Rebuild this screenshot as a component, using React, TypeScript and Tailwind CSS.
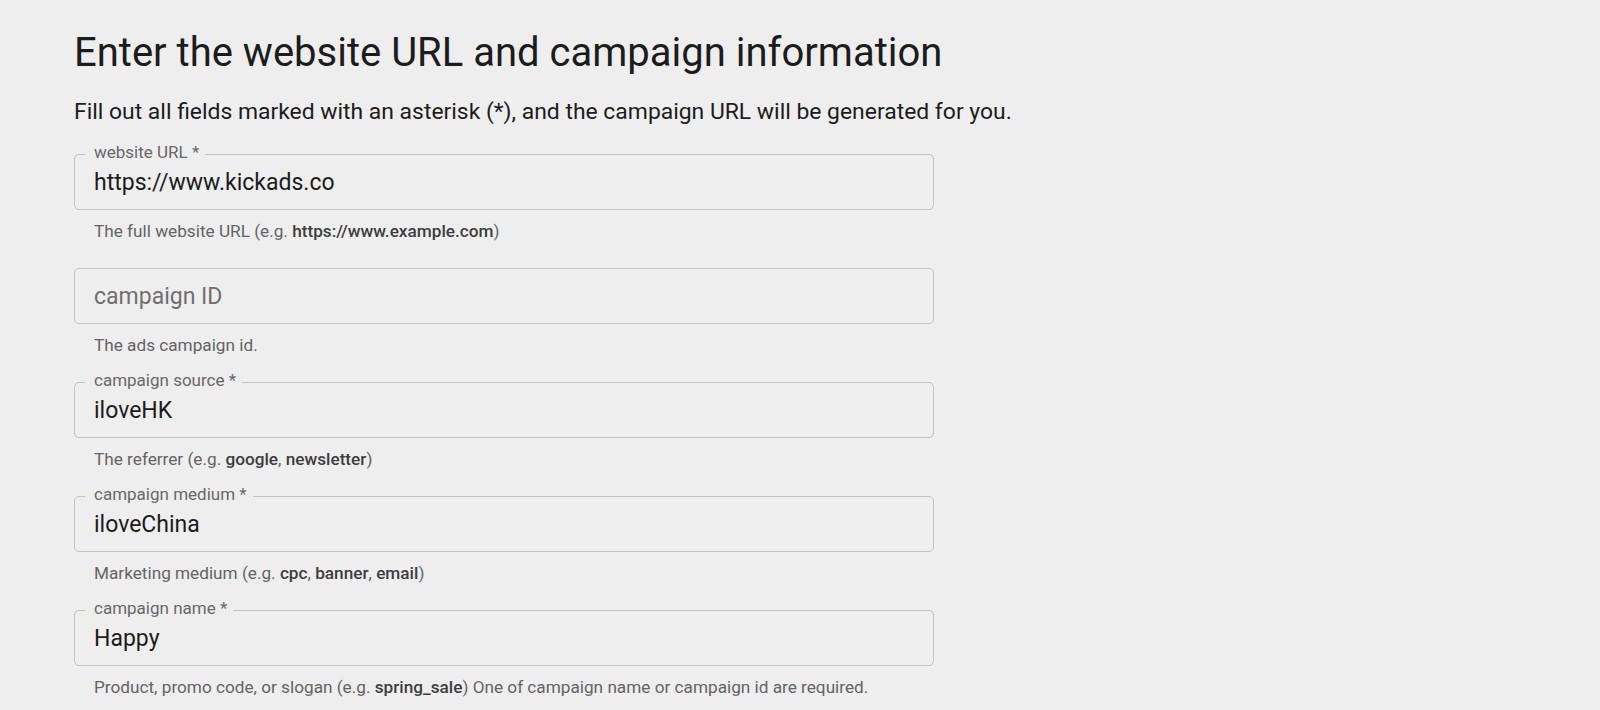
import React from 'react';

type Field = {
  label: string;
  required?: boolean;
  value: string;
  helper: React.ReactNode;
};

const fields: Field[] = [
  {
    label: 'website URL',
    required: true,
    value: 'https://www.kickads.co',
    helper: (
      <>
        The full website URL (e.g. <b className="font-medium text-[#3d3d3d]">https://www.example.com</b>)
      </>
    ),
  },
  {
    label: 'campaign ID',
    value: '',
    helper: <>The ads campaign id.</>,
  },
  {
    label: 'campaign source',
    required: true,
    value: 'iloveHK',
    helper: (
      <>
        The referrer (e.g. <b className="font-medium text-[#3d3d3d]">google</b>,{' '}
        <b className="font-medium text-[#3d3d3d]">newsletter</b>)
      </>
    ),
  },
  {
    label: 'campaign medium',
    required: true,
    value: 'iloveChina',
    helper: (
      <>
        Marketing medium (e.g. <b className="font-medium text-[#3d3d3d]">cpc</b>,{' '}
        <b className="font-medium text-[#3d3d3d]">banner</b>, <b className="font-medium text-[#3d3d3d]">email</b>)
      </>
    ),
  },
  {
    label: 'campaign name',
    required: true,
    value: 'Happy',
    helper: (
      <>
        Product, promo code, or slogan (e.g. <b className="font-medium text-[#3d3d3d]">spring_sale</b>) One of
        campaign name or campaign id are required.
      </>
    ),
  },
];

function OutlinedField({ field }: { field: Field }) {
  const filled = field.value.length > 0;
  return (
    <div className="mb-[26px] w-[860px]">
      <div className="relative h-[56px] rounded-[5px] border border-[#c2c2c2] flex items-center pl-[19px] pt-[3px]">
        {filled ? (
          <>
            <span className="absolute left-[10px] top-[-3px] -translate-y-1/2 bg-[#eeeeee] pl-[9px] pr-[6px] text-[17px] leading-[18px] text-[#686868]">
              {field.label}
              {field.required ? ' *' : ''}
            </span>
            <span className="text-[23px] text-[#1c1c1c]">{field.value}</span>
          </>
        ) : (
          <span className="text-[23px] text-[#6f6f6f]">{field.label}</span>
        )}
      </div>
      <p className="mt-[10px] pl-[20px] text-[17.2px] leading-[22px] text-[#646464]">{field.helper}</p>
    </div>
  );
}

export default function App() {
  return (
    <main className="min-h-screen bg-[#eeeeee] pl-[74px] pt-[29px] font-['Roboto',sans-serif]">
      <h1 className="text-[40px] leading-[48px] font-normal text-[#1c1c1c]">
        Enter the website URL and campaign information
      </h1>
      <p className="mt-[20px] text-[22.9px] leading-[30px] text-[#1c1c1c]">
        Fill out all fields marked with an asterisk (*), and the campaign URL will be generated for you.
      </p>
      <div className="mt-[27px] flex flex-col">
        {fields.map((f) => (
          <OutlinedField key={f.label} field={f} />
        ))}
      </div>
    </main>
  );
}
